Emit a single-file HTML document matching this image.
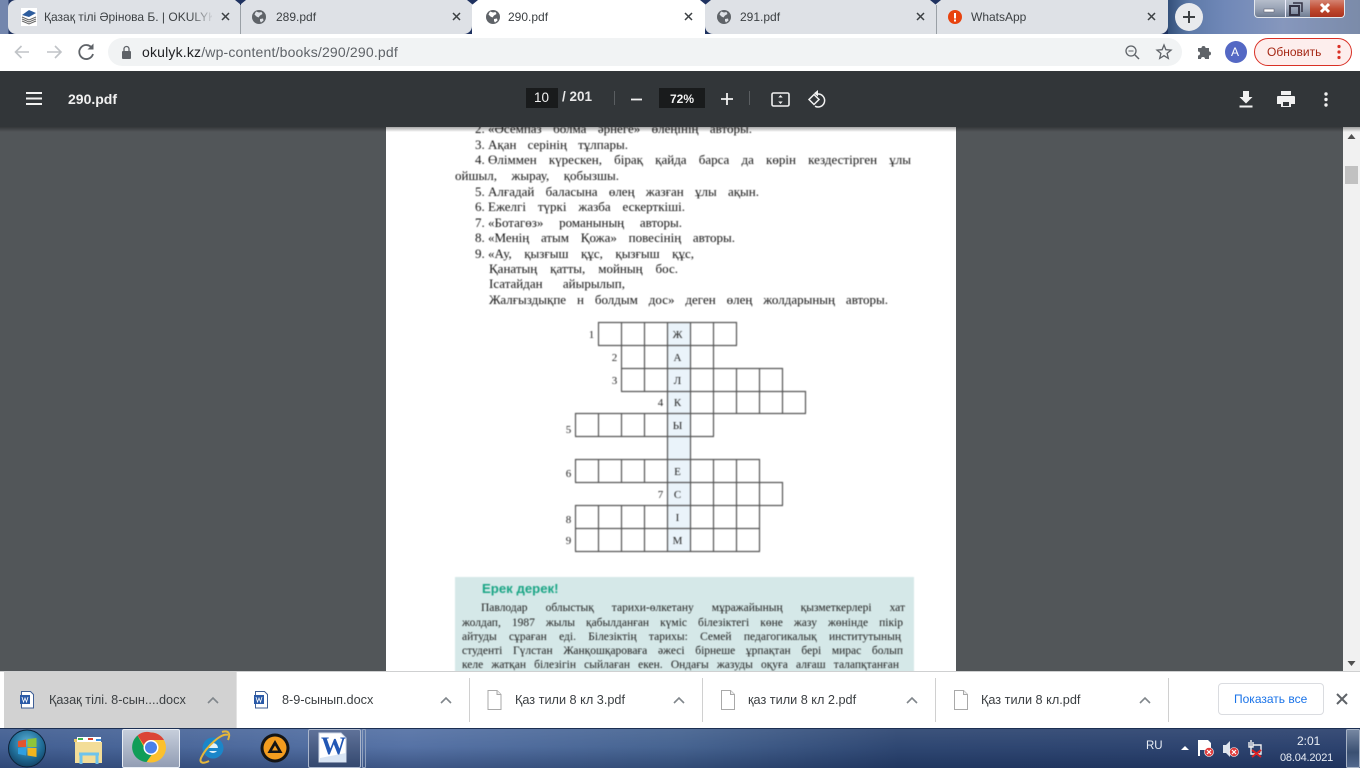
<!DOCTYPE html>
<html><head><meta charset="utf-8"><style>
*{box-sizing:border-box}
html,body{margin:0;padding:0;width:1360px;height:768px;overflow:hidden;background:#525659;font-family:"Liberation Sans","Noto Sans CJK SC",sans-serif}
.a{position:absolute}
.t{position:absolute;white-space:nowrap;line-height:16px}
svg{position:absolute;overflow:visible}
.tab{position:absolute;top:0;height:34px;background:#dee1e6}
.tt{position:absolute;top:9px;font-size:12px;line-height:16px;color:#3c4043;white-space:nowrap}
.l{position:absolute;height:16px;line-height:16px;font-family:"Liberation Serif","Noto Serif CJK SC",serif;font-size:13px;color:#111;white-space:normal;text-align:justify;text-align-last:justify;overflow:hidden}
.l b{font-weight:normal;display:inline-block}
.g{font-size:11.5px;height:14px;line-height:14px;color:#1c1c1c}
.cw{position:absolute;font-family:"Liberation Serif",serif;font-size:11px;line-height:12px;color:#222;text-align:center;width:23px}
.dl{position:absolute;font-size:12.700px;line-height:16px;top:692px;color:#3c4043;white-space:nowrap}
.sep{position:absolute;width:1px;top:678px;height:44px;background:#d0d0d0}
</style></head><body>

<!-- tab strip -->
<div class="a" style="left:0;top:0;width:1360px;height:34px;background:linear-gradient(90deg,#7386ad 0,#7386ad 8px,#1f3260 9px,#1f3260 1167px)"></div>
<div class="a" style="left:1168px;top:0;width:192px;height:34px;background:linear-gradient(90deg,#33507a 0,#5f7ba9 12%,#7088b8 30%,#8697bd 60%,#7b8ba9 100%)"></div>
<div class="tab" style="left:8px;width:232px;border-radius:8px 0 0 8px"></div>
<div class="tab" style="left:241px;width:231px;border-radius:0 0 8px 0"></div>
<div class="a" style="left:240px;top:5px;width:1px;height:29px;background:#9aa0a6"></div>
<div class="a" style="left:936px;top:5px;width:1px;height:29px;background:#9aa0a6;z-index:2"></div>
<div class="tab" style="left:705px;width:230px;border-radius:0 0 0 8px"></div>
<div class="tab" style="left:935px;width:233px;border-radius:0 0 8px 0"></div>
<div class="tab" style="left:472px;width:233px;background:#fff"></div>
<svg style="left:0;top:0;z-index:3" width="1360" height="6">
<path d="M235 0h11l-5.500 4.500zM467 0h11l-5.500 4.500zM700 0h11l-5.500 4.500zM930 0h11l-5.500 4.500z" fill="#1f3260"/>
</svg>

<svg style="left:21px;top:8px" width="16" height="18" viewBox="0 0 16 18"><rect width="16" height="18" fill="#fff"/><path d="M1 7l7-5 7 3-7 4z" fill="#2e5d9e"/><path d="M1 9l7 3 7-3M1 11l7 3 7-3M1 13l7 3 7-3" stroke="#666" fill="none"/></svg>
<div class="tt" style="left:44px;width:168px;overflow:hidden">Қазақ тілі Әрінова Б. | OKULYK.KZ</div>
<div class="a" style="left:190px;top:5px;width:24px;height:24px;background:linear-gradient(90deg,rgba(222,225,230,0),#dee1e6)"></div>

<svg style="left:252px;top:10px" width="14" height="14" viewBox="0 0 14 14"><circle cx="7" cy="7" r="7" fill="#5f6368"/><path d="M4 1.500l3 1 2.500-.5 1 2-2.500 1.500-1.500 2-2-1-2-2zM8 9l3-.5.500 2-2.500 2-1-1.500z" fill="#dee1e6"/></svg>
<div class="tt" style="left:276px">289.pdf</div>
<svg style="left:486px;top:10px" width="14" height="14" viewBox="0 0 14 14"><circle cx="7" cy="7" r="7" fill="#5f6368"/><path d="M4 1.500l3 1 2.500-.5 1 2-2.500 1.500-1.500 2-2-1-2-2zM8 9l3-.5.500 2-2.500 2-1-1.500z" fill="#fff"/></svg>
<div class="tt" style="left:508px">290.pdf</div>
<svg style="left:717px;top:10px" width="14" height="14" viewBox="0 0 14 14"><circle cx="7" cy="7" r="7" fill="#5f6368"/><path d="M4 1.500l3 1 2.500-.5 1 2-2.500 1.500-1.500 2-2-1-2-2zM8 9l3-.5.500 2-2.500 2-1-1.500z" fill="#dee1e6"/></svg>
<div class="tt" style="left:740px">291.pdf</div>
<svg style="left:948px;top:10px" width="14" height="14" viewBox="0 0 14 14"><circle cx="7" cy="7" r="7" fill="#e8430f"/><rect x="6" y="3" width="2" height="5.500" fill="#fff"/><rect x="6" y="9.500" width="2" height="2" fill="#fff"/></svg>
<div class="tt" style="left:971px">WhatsApp</div>

<svg style="left:0;top:0" width="1360" height="34">
<g stroke="#3c4043" stroke-width="1.500" fill="none">
<path d="M222 13l7 7M229 13l-7 7"/><path d="M453 13l7 7M460 13l-7 7"/><path d="M685 13l7 7M692 13l-7 7"/><path d="M917 13l7 7M924 13l-7 7"/><path d="M1148 13l7 7M1155 13l-7 7"/></g>
<circle cx="1189" cy="17" r="14" fill="#e8eaed"/>
<path d="M1189 11v12M1183 17h12" stroke="#3c4043" stroke-width="2"/>
</svg>

<!-- window controls -->
<div class="a" style="left:1254px;top:-2px;width:91px;height:20px;border:1px solid #e4e8ee;border-top:0;border-radius:0 0 4px 4px;overflow:hidden;background:linear-gradient(#bcc3d0,#9aa4b6 55%,#6f7c92)">
 <div class="a" style="left:30px;top:0;width:1px;height:20px;background:#eef"></div>
 <div class="a" style="left:55px;top:0;width:36px;height:20px;background:linear-gradient(#d99080,#c04a30 55%,#a8301c)"></div>
</div>
<svg style="left:1254px;top:0" width="91" height="18">
<rect x="10" y="9" width="10" height="3" fill="#fff" stroke="#556" stroke-width=".5"/>
<rect x="36" y="6" width="9" height="9" fill="none" stroke="#334" stroke-width="2"/><path d="M39 3h9v9" fill="none" stroke="#334" stroke-width="1.500"/>
<path d="M67 4l8 8M75 4l-8 8" stroke="#fff" stroke-width="3"/>
</svg>

<!-- toolbar -->
<div class="a" style="left:0;top:34px;width:1360px;height:37px;background:#fff"></div>
<div class="a" style="left:108px;top:38px;width:1074px;height:28px;border-radius:14px;background:#f1f3f4"></div>
<svg style="left:0;top:34px" width="1360" height="37">
<g fill="none" stroke="#c0c3c7" stroke-width="1.600"><path d="M29 18H16M21.500 12l-6 6 6 6"/><path d="M47 18h13M55 12l6 6-6 6"/></g>
<path d="M92 14a7 7 0 1 0 1 6" fill="none" stroke="#5f6368" stroke-width="1.800"/><path d="M93.500 9.500v6h-6z" fill="#5f6368"/>
<rect x="122" y="17" width="9" height="8" rx="1" fill="#5f6368"/><path d="M124 17v-2a2.500 2.500 0 0 1 5 0v2" fill="none" stroke="#5f6368" stroke-width="1.300"/>
<circle cx="1131" cy="17" r="5" fill="none" stroke="#5f6368" stroke-width="1.300"/><path d="M1135 21l4 4" stroke="#5f6368" stroke-width="1.500"/><path d="M1128.500 17h5" stroke="#5f6368"/>
<path d="M1164 11l1.900 4.700 5.100.4-3.900 3.300 1.200 5-4.300-2.700-4.300 2.700 1.200-5-3.900-3.300 5.100-.4z" fill="none" stroke="#5f6368" stroke-width="1.300"/>
<path d="M1198 14h3.500a2 2 0 0 1 4 0h3.500v3.500a2 2 0 0 1 0 4V25h-4a2 2 0 0 0-4 0h-3v-3.500a2 2 0 0 0 0-4z" fill="#5f6368"/>
<circle cx="1236" cy="18" r="11" fill="#5468c4"/>
</svg>
<div class="t" style="left:1231px;top:44px;font-size:12px;color:#fff">A</div>
<div class="t" style="left:142px;top:44px;font-size:14px;letter-spacing:.18px;color:#202124">okulyk.kz<span style="color:#5f6368">/wp-content/books/290/290.pdf</span></div>
<div class="a" style="left:1254px;top:38px;width:98px;height:28px;border:1px solid #d93025;border-radius:14px;background:#fdeeed"></div>
<div class="t" style="left:1267px;top:44px;font-size:12px;color:#a52714">Обновить</div>
<svg style="left:1336px;top:44px" width="6" height="16"><circle cx="3" cy="2.500" r="1.600" fill="#d93025"/><circle cx="3" cy="8" r="1.600" fill="#d93025"/><circle cx="3" cy="13.500" r="1.600" fill="#d93025"/></svg>

<!-- page -->
<div class="a" style="left:386px;top:127px;width:570px;height:545px;background:#fff"></div>
<div class="a" style="left:0;top:0;width:1360px;height:768px;filter:blur(.4px)">
<div class="l" style="left:475px;top:121px;width:277px"><b>2. «Әсемпаз</b> болма әрнеге» өлеңінің авторы.</div>
<div class="l" style="left:475px;top:137px;width:153px"><b>3. Ақан</b> серінің тұлпары.</div>
<div class="l" style="left:475px;top:152px;width:436px"><b>4. Өліммен</b> күрескен, бірақ қайда барса да көрін кездестірген ұлы</div>
<div class="l" style="left:455px;top:168px;width:164px">ойшыл, жырау, қобызшы.</div>
<div class="l" style="left:475px;top:184px;width:284px"><b>5. Алғадай</b> баласына өлең жазған ұлы ақын.</div>
<div class="l" style="left:475px;top:199px;width:210px"><b>6. Ежелгі</b> түркі жазба ескерткіші.</div>
<div class="l" style="left:475px;top:215px;width:207px"><b>7. «Ботагөз»</b> романының авторы.</div>
<div class="l" style="left:475px;top:230px;width:260px"><b>8. «Менің</b> атым Қожа» повесінің авторы.</div>
<div class="l" style="left:475px;top:246px;width:219px"><b>9. «Ау,</b> қызғыш құс, қызғыш құс,</div>
<div class="l" style="left:489px;top:261px;width:189px">Қанатың қатты, мойның бос.</div>
<div class="l" style="left:489px;top:276px;width:136px">Ісатайдан айырылып,</div>
<div class="l" style="left:489px;top:292px;width:399px">Жалғыздықпе н болдым дос» деген өлең жолдарының авторы.</div>

<div class="a" style="left:455px;top:577px;width:459px;height:95px;background:#d5e8e8"></div>
<div class="t" style="left:482px;top:581px;font-size:13.200px;font-weight:bold;color:#1aa585">Ерек дерек!</div>
<div class="l g" style="left:481px;top:601px;width:424px">Павлодар облыстық тарихи-өлкетану мұражайының қызметкерлері хат</div>
<div class="l g" style="left:462px;top:616px;width:441px">жолдап, 1987 жылы қабылданған күміс білезіктегі көне жазу жөнінде пікір</div>
<div class="l g" style="left:462px;top:630px;width:439px">айтуды сұраған еді. Білезіктің тарихы: Семей педагогикалық институтының</div>
<div class="l g" style="left:462px;top:644px;width:441px">студенті Гүлстан Жанқошқароваға әжесі бірнеше ұрпақтан бері мирас болып</div>
<div class="l g" style="left:462px;top:658px;width:437px">келе жатқан білезігін сыйлаған екен. Ондағы жазуды оқуға алғаш талапқтанған</div>

<svg style="left:0;top:0" width="1360" height="768">
<rect x="667" y="322" width="23" height="229" fill="#eaf3fa"/>
<g fill="none" stroke="#555" stroke-width="1.200">
<path d="M598 322.500H737M598 345.500H737M621 368.500H783M621 391.500H806M575 413.500H806M575 436.500H714M575 459.500H760M575 482.500H783M575 505.500H783M575 528.500H760M575 551.500H760"/>
<path d="M598.500 322V345M621.500 322V391M644.500 322V391M667.500 322V551M690.500 322V551M713.500 322V436M736.500 322V345"/>
<path d="M736.500 368V413M759.500 368V413M782.500 368V413M805.500 391V413"/>
<path d="M575.500 413V436M598.500 413V436M621.500 413V436M644.500 413V436"/>
<path d="M575.500 459V482M598.500 459V482M621.500 459V482M644.500 459V482M713.500 459V551M736.500 459V551M759.500 459V505M782.500 482V505"/>
<path d="M575.500 505V551M598.500 505V551M621.500 505V551M644.500 505V551M759.500 505V551"/>
</g>
</svg>
<div class="cw" style="left:666px;top:329px">Ж</div>
<div class="cw" style="left:666px;top:352px">А</div>
<div class="cw" style="left:666px;top:375px">Л</div>
<div class="cw" style="left:666px;top:397px">К</div>
<div class="cw" style="left:666px;top:420px">Ы</div>
<div class="cw" style="left:666px;top:466px">Е</div>
<div class="cw" style="left:666px;top:489px">С</div>
<div class="cw" style="left:666px;top:512px">І</div>
<div class="cw" style="left:666px;top:535px">М</div>
<div class="cw" style="left:580px;top:329px">1</div>
<div class="cw" style="left:603px;top:352px">2</div>
<div class="cw" style="left:603px;top:375px">3</div>
<div class="cw" style="left:649px;top:397px">4</div>
<div class="cw" style="left:557px;top:424px">5</div>
<div class="cw" style="left:557px;top:468px">6</div>
<div class="cw" style="left:649px;top:489px">7</div>
<div class="cw" style="left:557px;top:514px">8</div>
<div class="cw" style="left:557px;top:535px">9</div>
</div>

<!-- scrollbar -->
<div class="a" style="left:1343px;top:127px;width:17px;height:545px;background:#f1f1f1"></div>
<div class="a" style="left:1345px;top:166px;width:13px;height:18px;background:#c1c1c1"></div>
<svg style="left:1343px;top:127px" width="17" height="545"><path d="M8.500 7l4 5h-8z" fill="#505050"/><path d="M8.500 539l4-5h-8z" fill="#505050"/></svg>

<!-- pdf bar -->
<div class="a" style="left:0;top:127px;width:1360px;height:5px;background:linear-gradient(rgba(0,0,0,.35),rgba(0,0,0,0))"></div>
<div class="a" style="left:0;top:71px;width:1360px;height:56px;background:#323639"></div>
<svg style="left:0;top:71px" width="1360" height="56">
<path d="M26 22h16M26 27.500h16M26 33h16" stroke="#f1f1f1" stroke-width="2"/>
<rect x="526" y="17" width="32" height="20" fill="#191b1c"/>
<rect x="659" y="17" width="46" height="20" fill="#191b1c"/>
<rect x="614" y="20" width="1" height="14" fill="#5a5e61"/>
<rect x="749" y="20" width="1" height="14" fill="#5a5e61"/>
<path d="M631 28.500h11" stroke="#f1f1f1" stroke-width="1.800"/>
<path d="M727 22v12M721 28h12" stroke="#f1f1f1" stroke-width="1.800"/>
<rect x="772" y="22" width="17" height="13" rx="1.500" fill="none" stroke="#f1f1f1" stroke-width="1.600"/>
<path d="M780.500 24l2.200 2.500h-4.400zM780.500 33l2.200-2.500h-4.400z" fill="#f1f1f1"/>
<path d="M816 24a6.500 6.500 0 1 1-3 12.200" fill="none" stroke="#f1f1f1" stroke-width="1.500" transform="translate(2,-1)"/>
<path d="M818 19v6.500l-4-3.200z" fill="#f1f1f1"/>
<path d="M814 23.500l5 5-5 5-5-5z" fill="none" stroke="#f1f1f1" stroke-width="1.500"/>
<path d="M1243 20h6v6h3.500l-6.500 6.500-6.500-6.500h3.500zM1239.500 34.500h13v2h-13z" fill="#f1f1f1"/>
<path d="M1281 20h10v4h-10zM1278 25h16a1 1 0 0 1 1 1v7h-4v3h-10v-3h-4v-7a1 1 0 0 1 1-1z" fill="#f1f1f1"/><rect x="1283" y="31" width="6" height="4" fill="#323639"/>
<circle cx="1326" cy="23" r="1.700" fill="#f1f1f1"/><circle cx="1326" cy="28.500" r="1.700" fill="#f1f1f1"/><circle cx="1326" cy="34" r="1.700" fill="#f1f1f1"/>
</svg>
<div class="t" style="left:68px;top:91px;font-size:14px;font-weight:bold;color:#f1f1f1">290.pdf</div>
<div class="t" style="left:534px;top:90px;font-size:13.500px;color:#f1f1f1">10</div>
<div class="t" style="left:562px;top:89px;font-size:13.500px;font-weight:bold;color:#e8e8e8">/ 201</div>
<div class="t" style="left:670px;top:91px;font-size:12px;font-weight:bold;color:#f1f1f1">72%</div>

<!-- download bar -->
<div class="a" style="left:0;top:671px;width:1360px;height:57px;background:#fff;border-top:1px solid #cfd0d1"></div>
<div class="a" style="left:4px;top:672px;width:232px;height:56px;background:#d2d2d2"></div>
<div class="sep" style="left:469px"></div><div class="sep" style="left:702px"></div><div class="sep" style="left:935px"></div><div class="sep" style="left:1168px"></div>
<div class="a" style="left:236px;top:672px;width:1px;height:56px;background:#e3e3e3"></div>

<svg style="left:0;top:672px" width="1360" height="56">
<defs><g id="w"><path d="M1.500.500h9l3 3v13.500h-12z" fill="#fff" stroke="#3f5f96"/><rect x="0" y="4" width="10" height="9" fill="#2a5aa8"/><path d="M2 6l1.500 5 1.500-4 1.500 4 1.500-5" fill="none" stroke="#fff" stroke-width=".8"/></g>
<g id="p"><path d="M.5.500h9l4 4v15H.5z" fill="#fff" stroke="#a9a9a9"/><path d="M9.500.500v4h4" fill="#eee" stroke="#a9a9a9"/></g>
<path id="c" d="M0 5l5-5 5 5" fill="none" stroke="#80868b" stroke-width="1.600"/></defs>
<use href="#w" x="20" y="19"/><use href="#w" x="254" y="19"/>
<use href="#p" x="487.500" y="18"/><use href="#p" x="721" y="18"/><use href="#p" x="954" y="18"/>
<use href="#c" x="208" y="26"/><use href="#c" x="441" y="26"/><use href="#c" x="674" y="26"/><use href="#c" x="907" y="26"/><use href="#c" x="1140" y="26"/>
<path d="M1337 22l10 10M1347 22l-10 10" stroke="#5f6368" stroke-width="2"/>
</svg>
<div class="dl" style="left:49px">Қазақ тілі. 8-сын....docx</div>
<div class="dl" style="left:282px">8-9-сынып.docx</div>
<div class="dl" style="left:515px">Қаз тили 8 кл 3.pdf</div>
<div class="dl" style="left:748px">қаз тили 8 кл 2.pdf</div>
<div class="dl" style="left:981px">Қаз тили 8 кл.pdf</div>
<div class="a" style="left:1218px;top:683px;width:106px;height:32px;border:1px solid #dadce0;border-radius:4px;background:#fff"></div>
<div class="t" style="left:1234px;top:691px;font-size:12px;color:#1a73e8">Показать все</div>

<!-- taskbar -->
<div class="a" style="left:0;top:728px;width:1360px;height:40px;background:linear-gradient(90deg,#3f5c90 0,#5370a4 30%,#43618f 50%,#2b4470 66%,#293f6c 100%)"></div>
<div class="a" style="left:0;top:728px;width:1360px;height:40px;background:linear-gradient(rgba(255,255,255,.08),rgba(255,255,255,.02) 45%,rgba(10,25,60,.3));border-top:1px solid #1c2f52"></div>
<div class="a" style="left:122px;top:729px;width:58px;height:39px;border:1px solid #e8edf5;border-radius:2px;background:linear-gradient(#c6cedb,#929db4)"></div>
<div class="a" style="left:308px;top:729px;width:53px;height:39px;border:1px solid #aab6cc;border-radius:2px;background:linear-gradient(#5f7299,#34486f)"></div>
<div class="a" style="left:362px;top:729px;width:4px;height:39px;border:1px solid #8fa0bd;border-radius:1px"></div>

<svg style="left:0;top:728px" width="400" height="40" viewBox="0 0 400 40">
<defs><radialGradient id="orb" cx=".5" cy=".35" r=".7"><stop offset="0" stop-color="#5cb2d8"/><stop offset=".6" stop-color="#1f6c96"/><stop offset="1" stop-color="#123a5c"/></radialGradient></defs>
<circle cx="27" cy="20.500" r="18.500" fill="url(#orb)" stroke="#0d2238"/>
<path d="M18 13l8-1.500v7.500h-8z" fill="#e2542e"/><path d="M27.500 11l9-1v9h-9z" fill="#8fc43a"/><path d="M18 20h8v7.500l-8-1.500z" fill="#2f9fe0"/><path d="M27.500 20h9v9l-9-1.500z" fill="#f2b51d"/>
<path d="M75 14h27v21H75z" fill="#f3dd98"/><path d="M74 11h13l3 3H74z" fill="#e9c969"/><rect x="77" y="9" width="24" height="5" fill="#fff"/><rect x="78" y="10" width="5" height="2" fill="#3eb54a"/><rect x="88" y="10" width="5" height="2" fill="#d8402a"/>
<rect x="96" y="11" width="5" height="2" fill="#3a8fe0"/>
<path d="M81 36v-10h16v10M79 26h20" fill="none" stroke="#6fc4ec" stroke-width="3"/>
<circle cx="151" cy="19.500" r="15" fill="#fbc02d"/>
<path d="M151 4.500a15 15 0 0 1 13 7.500h-13a7.500 7.500 0 0 0-7 5l-6.500-9.500A15 15 0 0 1 151 4.500z" fill="#db4437"/>
<path d="M137.500 7.500l6.500 11.500a7.500 7.500 0 0 0 7.500 8l-5 7A15 15 0 0 1 137.500 7.500z" fill="#0f9d58"/>
<circle cx="151" cy="19.500" r="7.500" fill="#fff"/><circle cx="151" cy="19.500" r="6" fill="#4a80e8"/>
<circle cx="213" cy="20" r="10.500" fill="#1b86c9"/><circle cx="213" cy="20" r="5" fill="#e0f2fb"/><path d="M205 20h16v3h-16z" fill="#1b86c9"/>
<path d="M228 7c-6-3-22 12-27 23-2 5 2 6 8 3" fill="none" stroke="#e6b73a" stroke-width="2"/>
<path d="M222 4c6-2 9 1 6 8" fill="none" stroke="#e6b73a" stroke-width="2"/>
<circle cx="275" cy="20" r="14.500" fill="#151515"/><circle cx="275" cy="20" r="11.500" fill="#f39c1f"/>
<path d="M275 12l7.500 13h-15zM275 17.500l-3 5h6z" fill="#151515" fill-rule="evenodd"/>
<path d="M319 5h22l5 5v24h-27z" fill="#fff" stroke="#cfd8e8"/>
<path d="M320 30l26-5v9h-26z" fill="#d8e4f3"/>
</svg>
<div class="t" style="left:321px;top:735px;font-family:'Liberation Serif',serif;font-size:25px;font-weight:bold;color:#2257b4;line-height:24px">W</div>

<div class="t" style="left:1146px;top:738px;font-size:11.500px;color:#e8edf5">RU</div>
<svg style="left:1140px;top:728px" width="220" height="40">
<path d="M41 22l4-4 4 4z" fill="#fff"/>
<path d="M59 12v16" stroke="#fff" stroke-width="2"/><path d="M60 12h8l3 3v7H60z" fill="#fff"/>
<circle cx="69" cy="24" r="4.500" fill="#e03c3c" stroke="#fff" stroke-width=".6"/><path d="M67 22l4 4M71 22l-4 4" stroke="#fff" stroke-width="1.200"/>
<path d="M83 17h3l4-4v16l-4-4h-3z" fill="#dfe5ee"/>
<circle cx="94" cy="24" r="4.500" fill="#e03c3c" stroke="#fff" stroke-width=".6"/><path d="M92 22l4 4M96 22l-4 4" stroke="#fff" stroke-width="1.200"/>
<path d="M109 14v5h4v-5M111 12v10M113 17h8v9h-10v-4" fill="none" stroke="#f0f0f0" stroke-width="1.400"/>
<path d="M112 22l9 7M121 22l-9 7" stroke="#e02020" stroke-width="1.800"/>
<rect x="206.500" y="1.500" width="13" height="38" rx="1" fill="url(#sd)" stroke="#a7b3c6"/>
<defs><linearGradient id="sd" x1="0" y1="0" x2="0" y2="1"><stop offset="0" stop-color="#7788a3"/><stop offset=".6" stop-color="#3a5072"/><stop offset="1" stop-color="#53698e"/></linearGradient></defs>
</svg>
<div class="t" style="left:1297px;top:733px;font-size:12px;color:#e8edf5">2:01</div>
<div class="t" style="left:1280px;top:750px;font-size:11px;letter-spacing:-.2px;color:#e8edf5">08.04.2021</div>
</body></html>
